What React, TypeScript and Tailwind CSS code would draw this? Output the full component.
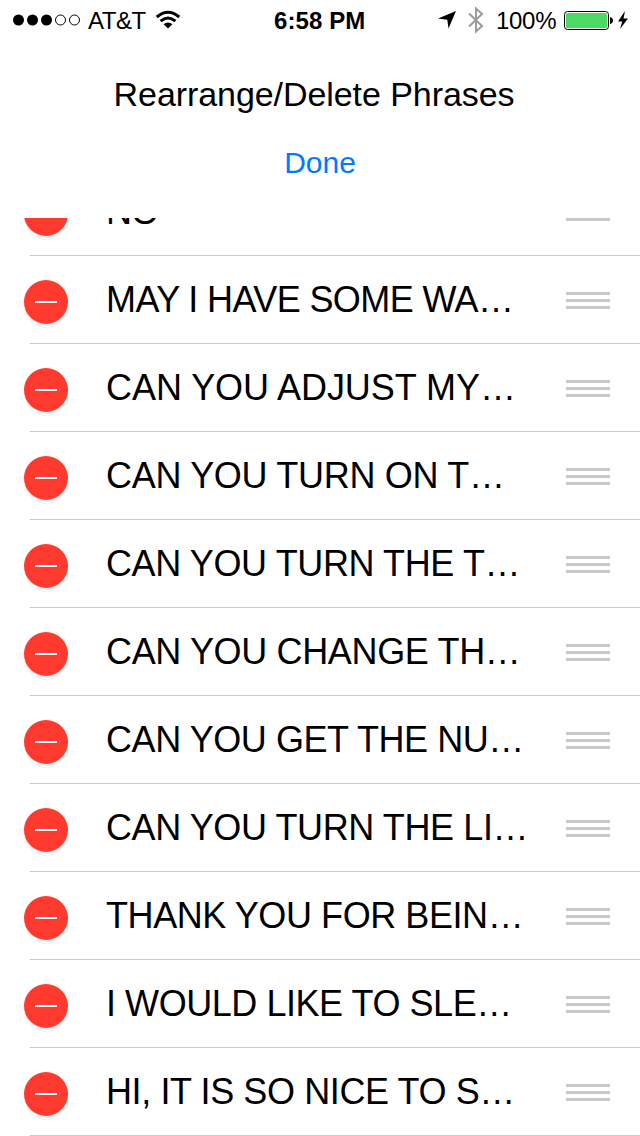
import React from "react";

const phrases = [
  { text: "NO", tracking: "tracking-[-1px]" },
  { text: "MAY I HAVE SOME WA…", tracking: "tracking-[-0.6px]" },
  { text: "CAN YOU ADJUST MY…", tracking: "tracking-[-0.05px]" },
  { text: "CAN YOU TURN ON T…", tracking: "tracking-[-0.3px]" },
  { text: "CAN YOU TURN THE T…", tracking: "tracking-[-0.38px]" },
  { text: "CAN YOU CHANGE TH…", tracking: "tracking-[-0.35px]" },
  { text: "CAN YOU GET THE NU…", tracking: "tracking-[-0.43px]" },
  { text: "CAN YOU TURN THE LI…", tracking: "tracking-[-0.4px]" },
  { text: "THANK YOU FOR BEIN…", tracking: "tracking-[-0.43px]" },
  { text: "I WOULD LIKE TO SLE…", tracking: "tracking-[-0.45px]" },
  { text: "HI, IT IS SO NICE TO S…", tracking: "tracking-[-0.4px]" },
];

const StatusBar = () => {
  return (
    <div className="flex h-10 w-full items-center text-[24px] leading-10">
      <div className="flex w-[274px] shrink-0 items-center pl-3">
        <svg width="70" height="14" viewBox="0 0 70 14">
          <circle cx="6.5" cy="7" r="5.5" />
          <circle cx="20.5" cy="7" r="5.5" />
          <circle cx="34.5" cy="7" r="5.5" />
          <circle cx="48.5" cy="7" r="5" fill="none" stroke="black" />
          <circle cx="62.5" cy="7" r="5" fill="none" stroke="black" />
        </svg>
        <span className="mt-[2px] ml-[6px] w-[58px] whitespace-nowrap tracking-[-0.5px]">AT&amp;T</span>
        <svg className="ml-[9px]" width="26" height="20" viewBox="0 0 26 20">
          <path d="M1.8 7 Q13 -2.6 24.2 7" fill="none" stroke="black" strokeWidth="3" />
          <path d="M5.6 11.2 Q13 4.8 20.4 11.2" fill="none" stroke="black" strokeWidth="3" />
          <path d="M8.6 14.2 Q13 10.6 17.4 14.2 L13 18.4 Z" />
        </svg>
      </div>
      <span className="mt-[2px] w-[94px] whitespace-nowrap font-bold tracking-[0.1px]">6:58 PM</span>
      <div className="flex flex-1 items-center pl-[70px]">
        <svg width="18" height="18" viewBox="0 0 18 18">
          <path d="M18 0 L10.5 17.5 L9.3 8.7 L0 7.6 Z" />
        </svg>
        <svg className="ml-[12px]" width="16" height="28" viewBox="0 0 16 28">
          <path d="M1 7.5 L14 20 L8 25.5 V2.5 L14 8 L1 20.5" fill="none" stroke="#9b9b9b" strokeWidth="2" />
        </svg>
        <span className="mt-[2px] ml-3 w-[62px] whitespace-nowrap tracking-[-0.3px]">100%</span>
        <svg className="ml-[6px]" width="66" height="22" viewBox="0 0 66 22">
          <rect x="0.5" y="2.5" width="44" height="18" rx="3" fill="white" stroke="black" />
          <rect x="2" y="4" width="41" height="15" rx="1.5" fill="#4cd964" />
          <path d="M46 8 Q49 9 49 11.5 Q49 14 46 15 Z" />
          <path d="M61 2 L54 12.5 H58.3 L56 20 L64 9.5 H59.5 Z" />
        </svg>
      </div>
    </div>
  );
};

const PhraseRow = ({ text, tracking }: { text: string; tracking: string }) => {
  return (
    <li className="flex h-[88px] shrink-0 items-center pl-6">
      <span className="mt-1 flex size-11 shrink-0 items-center justify-center rounded-full bg-[#ff3b30] shadow-[0_4px_1px_rgba(0,0,0,0.04)]">
        <span className="h-[2px] w-[22px] bg-white" />
      </span>
      <span className={`ml-[38px] w-[460px] whitespace-nowrap text-[36px] leading-[88px] ${tracking}`}>
        {text}
      </span>
      <span className="mt-[1px] flex w-11 shrink-0 flex-col gap-1">
        <span className="h-[3px] bg-[#c7c7cc]" />
        <span className="h-[3px] bg-[#c7c7cc]" />
        <span className="h-[3px] bg-[#c7c7cc]" />
      </span>
    </li>
  );
};

const App = () => {
  return (
    <div className="flex h-[1136px] w-[640px] flex-col overflow-hidden bg-white font-['Liberation_Sans',Arial,sans-serif] text-black">
      <StatusBar />
      <div className="flex h-[178px] shrink-0 flex-col items-center pt-[34px]">
        <h1 className="mr-[12px] whitespace-nowrap text-[34px] leading-10 tracking-[-0.07px]">
          Rearrange/Delete Phrases
        </h1>
        <button className="mt-[29px] text-[30px] leading-10 text-[#007aff]">Done</button>
      </div>
      <div className="flex-1 overflow-hidden">
        <ul className="-mt-[50px] flex flex-col">
          {phrases.map((phrase) => (
            <React.Fragment key={phrase.text}>
              <PhraseRow text={phrase.text} tracking={phrase.tracking} />
              <li className="-mt-px ml-[30px] h-px shrink-0 bg-[#c8c7cc]" />
            </React.Fragment>
          ))}
        </ul>
      </div>
    </div>
  );
};

export default App;
